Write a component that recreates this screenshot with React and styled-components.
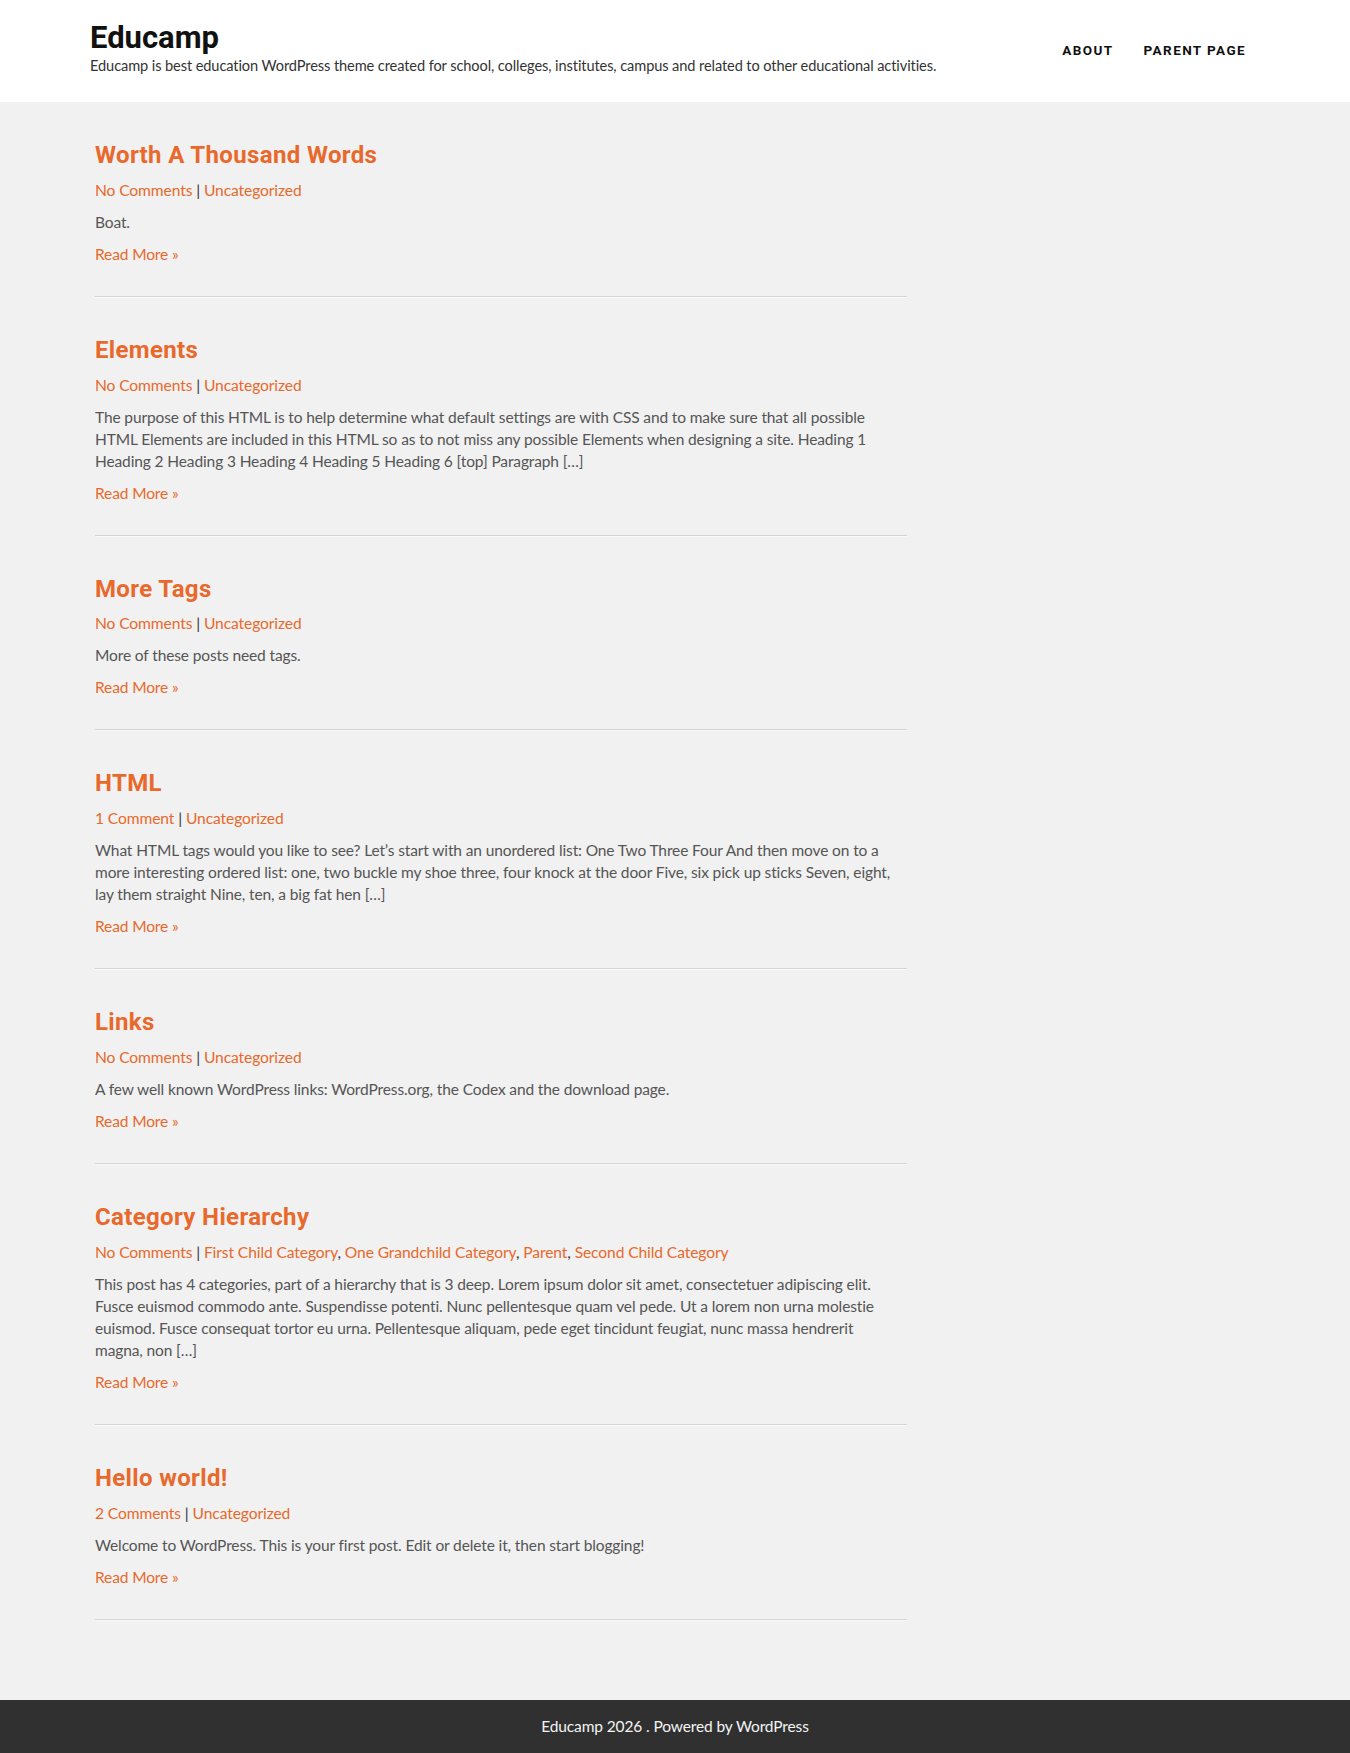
import React from "react";
import styled, { createGlobalStyle } from "styled-components";

const GlobalStyle = createGlobalStyle`
  html, body {
    margin: 0;
    padding: 0;
    background: #f1f1f1;
  }
  body {
    font-family: Lato, "Open Sans", sans-serif;
    color: #555;
  }
  a {
    text-decoration: none;
  }
`

const Header = styled.header`
  background: #fff;
  height: 102px;
  box-sizing: border-box;
  padding: 0 104px 0 90px;
  display: flex;
  align-items: center;
  justify-content: space-between;
`

const Brand = styled.div`
  display: flex;
  flex-direction: column;
  margin-top: -7px;
`

const SiteTitle = styled.a`
  font-family: Roboto, sans-serif;
  font-weight: 700;
  font-size: 31px;
  line-height: 36px;
  color: #111;
`

const Tagline = styled.p`
  margin: 0;
  font-size: 14.6px;
  letter-spacing: -0.1px;
  line-height: 20px;
  color: #333;
`

const Nav = styled.nav`
  display: flex;
  gap: 30px;
  margin-top: -2px;
`

const NavLink = styled.a`
  font-family: Roboto, sans-serif;
  font-weight: 700;
  font-size: 13.5px;
  letter-spacing: 1.4px;
  text-transform: uppercase;
  color: #111;
`

const Main = styled.main`
  width: 812px;
  margin-left: 95px;
  padding-bottom: 80px;
`

const Post = styled.article`
  padding: 39px 0 31px;
  border-bottom: 1px solid #d4d4d4;
  box-shadow: 0 1px 0 #f9f9f9;
`

const PostTitle = styled.h2`
  margin: 0 0 9px;
  font-family: Roboto, sans-serif;
  font-weight: 700;
  font-size: 24px;
  letter-spacing: 0.35px;
  line-height: 28.8px;
  color: #e8692b;
`

const Meta = styled.div`
  font-size: 15.6px;
  letter-spacing: -0.1px;
  line-height: 22px;
  color: #333;
`

const OrangeLink = styled.a`
  color: #e8692b;
`

const Excerpt = styled.p`
  margin: 10px 0 0;
  max-width: 805px;
  font-size: 15.5px;
  letter-spacing: -0.12px;
  line-height: 22px;
  color: #555;
`

const ReadMore = styled.a`
  display: block;
  margin-top: 10px;
  font-size: 15.5px;
  letter-spacing: -0.12px;
  line-height: 22px;
  color: #e8692b;
`

const Footer = styled.footer`
  background: #303030;
  height: 53px;
  display: flex;
  align-items: center;
  justify-content: center;
  font-size: 15.5px;
  letter-spacing: -0.12px;
  color: #f4f4f4;
`

const posts = [
  {
    title: "Worth A Thousand Words",
    comments: "No Comments",
    cats: ["Uncategorized"],
    excerpt: "Boat.",
  },
  {
    title: "Elements",
    comments: "No Comments",
    cats: ["Uncategorized"],
    excerpt:
      "The purpose of this HTML is to help determine what default settings are with CSS and to make sure that all possible HTML Elements are included in this HTML so as to not miss any possible Elements when designing a site. Heading 1 Heading 2 Heading 3 Heading 4 Heading 5 Heading 6 [top] Paragraph […]",
  },
  {
    title: "More Tags",
    comments: "No Comments",
    cats: ["Uncategorized"],
    excerpt: "More of these posts need tags.",
  },
  {
    title: "HTML",
    comments: "1 Comment",
    cats: ["Uncategorized"],
    excerpt:
      "What HTML tags would you like to see? Let’s start with an unordered list: One Two Three Four And then move on to a more interesting ordered list: one, two buckle my shoe three, four knock at the door Five, six pick up sticks Seven, eight, lay them straight Nine, ten, a big fat hen […]",
  },
  {
    title: "Links",
    comments: "No Comments",
    cats: ["Uncategorized"],
    excerpt:
      "A few well known WordPress links: WordPress.org, the Codex and the download page.",
  },
  {
    title: "Category Hierarchy",
    comments: "No Comments",
    cats: ["First Child Category", "One Grandchild Category", "Parent", "Second Child Category"],
    excerpt:
      "This post has 4 categories, part of a hierarchy that is 3 deep. Lorem ipsum dolor sit amet, consectetuer adipiscing elit. Fusce euismod commodo ante. Suspendisse potenti. Nunc pellentesque quam vel pede. Ut a lorem non urna molestie euismod. Fusce consequat tortor eu urna. Pellentesque aliquam, pede eget tincidunt feugiat, nunc massa hendrerit magna, non […]",
  },
  {
    title: "Hello world!",
    comments: "2 Comments",
    cats: ["Uncategorized"],
    excerpt:
      "Welcome to WordPress. This is your first post. Edit or delete it, then start blogging!",
  },
]

export default function App() {
  return (
    <>
      <GlobalStyle />
      <Header>
        <Brand>
          <SiteTitle href="#">Educamp</SiteTitle>
          <Tagline>
            Educamp is best education WordPress theme created for school, colleges, institutes, campus and related to other educational activities.
          </Tagline>
        </Brand>
        <Nav>
          <NavLink href="#">About</NavLink>
          <NavLink href="#">Parent Page</NavLink>
        </Nav>
      </Header>
      <Main>
        {posts.map((p) => (
          <Post key={p.title}>
            <PostTitle>{p.title}</PostTitle>
            <Meta>
              <OrangeLink href="#">{p.comments}</OrangeLink> |{" "}
              {p.cats.map((c, i) => (
                <React.Fragment key={c}>
                  <OrangeLink href="#">{c}</OrangeLink>
                  {i < p.cats.length - 1 ? ", " : ""}
                </React.Fragment>
              ))}
            </Meta>
            <Excerpt>{p.excerpt}</Excerpt>
            <ReadMore href="#">Read More »</ReadMore>
          </Post>
        ))}
      </Main>
      <Footer>Educamp 2026 . Powered by WordPress</Footer>
    </>
  )
}
